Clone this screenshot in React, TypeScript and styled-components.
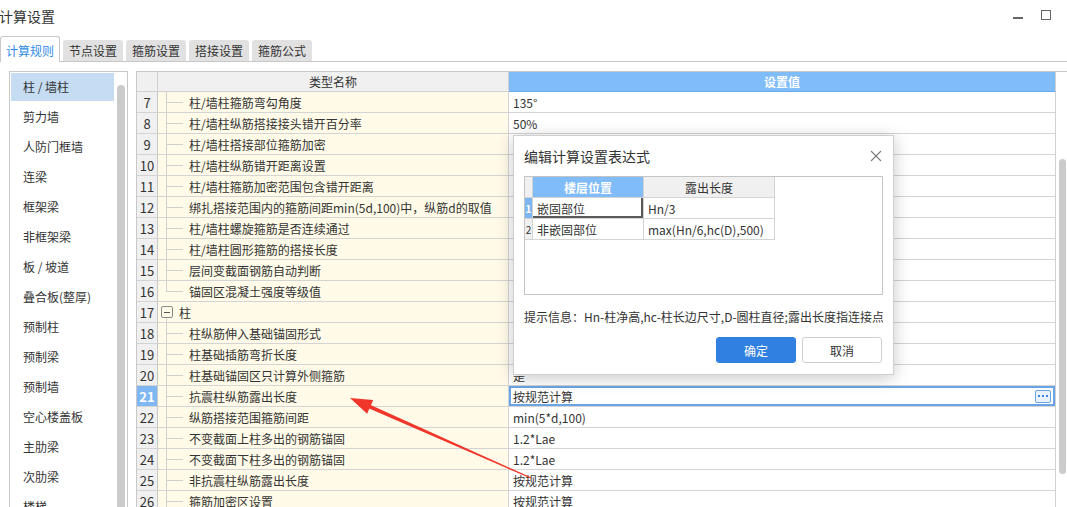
import React from 'react';
import styled, { createGlobalStyle, css } from 'styled-components';

const FONT = `"Noto Sans CJK SC", "Noto Sans", sans-serif`;

const GlobalStyle = createGlobalStyle`
  html, body {
    margin: 0;
    padding: 0;
    background: #fff;
  }
  #root {
    width: 1067px;
    height: 507px;
    overflow: hidden;
  }
`;

const Window = styled.div`
  position: relative;
  width: 1067px;
  height: 507px;
  overflow: hidden;
  display: flex;
  flex-direction: column;
  background: #fff;
  color: #333;
  font-family: ${FONT};
  font-size: 12px;
`;

const TitleBar = styled.div`
  height: 36px;
  flex: none;
  box-sizing: border-box;
  display: flex;
  align-items: flex-start;
  padding: 6px 16px 0 0;
`;

const Title = styled.div`
  font-size: 14px;
  line-height: 20px;
  margin-left: -1px;
`;

const Controls = styled.div`
  margin-left: auto;
  display: flex;
  align-items: flex-start;
  gap: 18px;
  padding-top: 4px;
`;

const MinButton = styled.div`
  width: 10px;
  height: 1.5px;
  margin-top: 7px;
  background: #666;
`;

const MaxButton = styled.div`
  width: 10px;
  height: 10px;
  box-sizing: border-box;
  border: 1.5px solid #666;
`;

const TabBar = styled.div`
  height: 26px;
  flex: none;
  box-sizing: border-box;
  display: flex;
  align-items: flex-end;
  gap: 3px;
  border-bottom: 1px solid #c8c8c8;
`;

const Tab = styled.div<{ $active?: boolean }>`
  width: 60px;
  height: 21px;
  box-sizing: border-box;
  display: flex;
  align-items: center;
  justify-content: center;
  border-radius: 3px 3px 0 0;
  background: #e1e1e1;
  color: #333;
  font-size: 12px;
  ${(p) =>
    p.$active &&
    css`
      height: 26px;
      margin-bottom: -1px;
      padding-top: 2px;
      background: #fff;
      color: #2f8be6;
      border: 1px solid #c8c8c8;
      border-bottom: none;
    `}
`;

const Body = styled.div`
  flex: 1;
  min-height: 0;
  display: flex;
  gap: 8px;
  padding: 9px 0 0 9px;
`;

const Sidebar = styled.div`
  width: 119px;
  flex: none;
  box-sizing: border-box;
  border: 1px solid #c8c8c8;
  border-bottom: none;
  padding: 1px;
  display: flex;
`;

const NavList = styled.div`
  width: 103px;
  flex: none;
  display: flex;
  flex-direction: column;
  gap: 2px;
`;

const NavItem = styled.div<{ $active?: boolean }>`
  height: 28px;
  flex: none;
  line-height: 28px;
  padding-left: 12px;
  white-space: nowrap;
  background: ${(p) => (p.$active ? '#c5dcf3' : 'transparent')};
`;

const ScrollTrack = styled.div<{ $top: number }>`
  flex: 1;
  padding: ${(p) => p.$top}px 0 0 3px;
`;

const ScrollThumb = styled.div<{ $w: number; $h: number }>`
  width: ${(p) => p.$w}px;
  height: ${(p) => p.$h}px;
  border-radius: 4px;
  background: #cbcbcb;
`;

const TablePane = styled.div`
  flex: 1;
  min-width: 0;
  display: flex;
  border-top: 1px solid #c8c8c8;
  border-left: 1px solid #c8c8c8;
`;

const Grid = styled.div`
  width: 919px;
  flex: none;
  display: flex;
  flex-direction: column;
`;

const HeadRow = styled.div`
  height: 20px;
  flex: none;
  display: flex;
`;

const HeadCell = styled.div<{ $w: number; $accent?: boolean }>`
  width: ${(p) => p.$w}px;
  flex: none;
  box-sizing: border-box;
  display: flex;
  align-items: center;
  justify-content: center;
  border-right: 1px solid #d0d0d0;
  border-bottom: 1px solid ${(p) => (p.$accent ? '#6aa9ea' : '#d0d0d0')};
  background: ${(p) => (p.$accent ? '#80bcf8' : '#f0f0f0')};
  color: ${(p) => (p.$accent ? '#fff' : '#333')};
  font-weight: ${(p) => (p.$accent ? 700 : 400)};
  font-size: 12px;
`;

const Row = styled.div`
  height: 21px;
  flex: none;
  display: flex;
`;

const NumCell = styled.div<{ $selected?: boolean }>`
  width: 21px;
  flex: none;
  box-sizing: border-box;
  display: flex;
  align-items: center;
  justify-content: center;
  border-right: 1px solid #c8c8c8;
  border-bottom: 1px solid #d4d4d4;
  background: ${(p) => (p.$selected ? '#7fb7f2' : '#f0f0f0')};
  color: ${(p) => (p.$selected ? '#fff' : '#333')};
  font-weight: ${(p) => (p.$selected ? 700 : 400)};
  font-size: 13px;
`;

const NameCell = styled.div`
  width: 351px;
  flex: none;
  box-sizing: border-box;
  display: flex;
  align-items: center;
  border-right: 1px solid #d4d4d4;
  border-bottom: 1px solid #d4d4d4;
  background: #fffbe8;
  white-space: nowrap;
  overflow: hidden;
`;

const Guide = styled.span<{ $last?: boolean }>`
  position: relative;
  width: 31px;
  flex: none;
  align-self: stretch;
  &::before {
    content: '';
    position: absolute;
    left: 8px;
    top: 0;
    width: 1px;
    height: ${(p) => (p.$last ? '50%' : '100%')};
    background: #cfcfcf;
  }
  &::after {
    content: '';
    position: absolute;
    left: 8px;
    top: 50%;
    width: 17px;
    height: 1px;
    background: #cfcfcf;
  }
`;

const Toggle = styled.span`
  position: relative;
  width: 12px;
  height: 12px;
  flex: none;
  box-sizing: border-box;
  margin: 0 6px 0 3px;
  border: 1px solid #8a8a8a;
  border-radius: 2px;
  display: flex;
  align-items: center;
  justify-content: center;
  &::before {
    content: '';
    width: 6px;
    height: 1px;
    background: #555;
  }
  &::after {
    content: '';
    position: absolute;
    left: 4px;
    top: 11px;
    width: 1px;
    height: 6px;
    background: #cfcfcf;
  }
`;

const ValueCell = styled.div<{ $selected?: boolean }>`
  width: 547px;
  flex: none;
  box-sizing: border-box;
  display: flex;
  align-items: center;
  padding-left: 4px;
  border-right: 1px solid #d0d0d0;
  border-bottom: 1px solid #d4d4d4;
  background: #fff;
  white-space: nowrap;
  ${(p) =>
    p.$selected &&
    css`
      box-shadow: inset 0 0 0 2px #69a5e6;
    `}
`;

const MoreButton = styled.span`
  width: 16px;
  height: 13px;
  margin: 0 4px 0 auto;
  box-sizing: border-box;
  border: 1px solid #6aa6e6;
  border-radius: 2px;
  background: #e9f1fc;
  display: flex;
  align-items: center;
  justify-content: center;
  gap: 2px;
`;

const Dot = styled.span`
  width: 2px;
  height: 2px;
  background: #3a84e0;
`;

const Dialog = styled.div`
  position: absolute;
  left: 513px;
  top: 135px;
  width: 381px;
  height: 240px;
  box-sizing: border-box;
  display: flex;
  flex-direction: column;
  padding: 0 10px 11px 10px;
  background: #fff;
  border: 1px solid #cfcfcf;
  box-shadow: 0 3px 16px rgba(0, 0, 0, 0.22);
`;

const DialogHeader = styled.div`
  height: 40px;
  flex: none;
  display: flex;
  align-items: center;
  justify-content: space-between;
  font-size: 14px;
  color: #333;
`;

const CloseIcon = styled.svg`
  width: 12px;
  height: 12px;
  margin-right: 1px;
`;

const ExprBox = styled.div`
  height: 119px;
  flex: none;
  box-sizing: border-box;
  border: 1px solid #c4c4c4;
  display: grid;
  grid-template-columns: 8px 111px 131px;
  grid-auto-rows: 21px;
  align-content: start;
`;

const ExprCell = styled.div<{ $tone?: 'head' | 'accent' | 'mark' | 'index'; $picked?: boolean; $center?: boolean }>`
  box-sizing: border-box;
  display: flex;
  align-items: center;
  justify-content: ${(p) => (p.$center ? 'center' : 'flex-start')};
  padding-left: ${(p) => (p.$center ? 0 : 4)}px;
  border-right: 1px solid #d4d4d4;
  border-bottom: 1px solid #d4d4d4;
  overflow: hidden;
  white-space: nowrap;
  font-size: 12px;
  background: #fff;
  color: #333;
  ${(p) =>
    p.$tone === 'head' &&
    css`
      background: #f0f0f0;
    `}
  ${(p) =>
    p.$tone === 'index' &&
    css`
      background: #f0f0f0;
      font-size: 10px;
    `}
  ${(p) =>
    p.$tone === 'accent' &&
    css`
      background: #80bcf8;
      color: #fff;
      font-weight: 700;
    `}
  ${(p) =>
    p.$tone === 'mark' &&
    css`
      background: #7db5f0;
      color: #fff;
      font-weight: 700;
      font-size: 10px;
    `}
  ${(p) =>
    p.$picked &&
    css`
      box-shadow: inset -2px -2px 0 #5a5a5a;
    `}
`;

const Hint = styled.div`
  height: 42px;
  flex: none;
  box-sizing: border-box;
  padding-top: 12px;
  line-height: 20px;
  white-space: nowrap;
  overflow: hidden;
  font-size: 12px;
  color: #333;
`;

const ButtonRow = styled.div`
  display: flex;
  justify-content: flex-end;
  gap: 6px;
  padding-right: 1px;
`;

const Button = styled.button<{ $primary?: boolean }>`
  width: 80px;
  height: 26px;
  box-sizing: border-box;
  border-radius: 3px;
  font-family: ${FONT};
  font-size: 12px;
  cursor: pointer;
  border: 1px solid ${(p) => (p.$primary ? '#2f80e0' : '#cfcfcf')};
  background: ${(p) => (p.$primary ? '#2f80e0' : '#fff')};
  color: ${(p) => (p.$primary ? '#fff' : '#333')};
`;

const Overlay = styled.svg`
  position: absolute;
  left: 0;
  top: 0;
  width: 1067px;
  height: 507px;
  pointer-events: none;
`;

type Kind = 'mid' | 'last' | 'group';

// values of rows 9-19 sit under the dialog, so they are left blank
const rows: { n: number; name: string; value: string; kind: Kind }[] = [
  { n: 7, name: '柱/墙柱箍筋弯勾角度', value: '135°', kind: 'mid' },
  { n: 8, name: '柱/墙柱纵筋搭接接头错开百分率', value: '50%', kind: 'mid' },
  { n: 9, name: '柱/墙柱搭接部位箍筋加密', value: '', kind: 'mid' },
  { n: 10, name: '柱/墙柱纵筋错开距离设置', value: '', kind: 'mid' },
  { n: 11, name: '柱/墙柱箍筋加密范围包含错开距离', value: '', kind: 'mid' },
  { n: 12, name: '绑扎搭接范围内的箍筋间距min(5d,100)中，纵筋d的取值', value: '', kind: 'mid' },
  { n: 13, name: '柱/墙柱螺旋箍筋是否连续通过', value: '', kind: 'mid' },
  { n: 14, name: '柱/墙柱圆形箍筋的搭接长度', value: '', kind: 'mid' },
  { n: 15, name: '层间变截面钢筋自动判断', value: '', kind: 'mid' },
  { n: 16, name: '锚固区混凝土强度等级值', value: '', kind: 'last' },
  { n: 17, name: '柱', value: '', kind: 'group' },
  { n: 18, name: '柱纵筋伸入基础锚固形式', value: '', kind: 'mid' },
  { n: 19, name: '柱基础插筋弯折长度', value: '', kind: 'mid' },
  { n: 20, name: '柱基础锚固区只计算外侧箍筋', value: '是', kind: 'mid' },
  { n: 21, name: '抗震柱纵筋露出长度', value: '按规范计算', kind: 'mid' },
  { n: 22, name: '纵筋搭接范围箍筋间距', value: 'min(5*d,100)', kind: 'mid' },
  { n: 23, name: '不变截面上柱多出的钢筋锚固', value: '1.2*Lae', kind: 'mid' },
  { n: 24, name: '不变截面下柱多出的钢筋锚固', value: '1.2*Lae', kind: 'mid' },
  { n: 25, name: '非抗震柱纵筋露出长度', value: '按规范计算', kind: 'mid' },
  { n: 26, name: '箍筋加密区设置', value: '按规范计算', kind: 'mid' },
];

const navItems = [
  '柱 / 墙柱',
  '剪力墙',
  '人防门框墙',
  '连梁',
  '框架梁',
  '非框架梁',
  '板 / 坡道',
  '叠合板(整厚)',
  '预制柱',
  '预制梁',
  '预制墙',
  '空心楼盖板',
  '主肋梁',
  '次肋梁',
  '楼梯',
];

const tabs = ['计算规则', '节点设置', '箍筋设置', '搭接设置', '箍筋公式'];

const SELECTED = 21;

const App: React.FC = () => {
  return (
    <Window>
      <GlobalStyle />
      <TitleBar>
        <Title>计算设置</Title>
        <Controls>
          <MinButton />
          <MaxButton />
        </Controls>
      </TitleBar>

      <TabBar>
        {tabs.map((t, i) => (
          <Tab key={t} $active={i === 0}>
            {t}
          </Tab>
        ))}
      </TabBar>

      <Body>
        <Sidebar>
          <NavList>
            {navItems.map((item, i) => (
              <NavItem key={item} $active={i === 0}>
                {item}
              </NavItem>
            ))}
          </NavList>
          <ScrollTrack $top={12}>
            <ScrollThumb $w={8} $h={500} />
          </ScrollTrack>
        </Sidebar>

        <TablePane>
          <Grid>
            <HeadRow>
              <HeadCell $w={21} />
              <HeadCell $w={351}>类型名称</HeadCell>
              <HeadCell $w={547} $accent>
                设置值
              </HeadCell>
            </HeadRow>
            {rows.map((r) => (
              <Row key={r.n}>
                <NumCell $selected={r.n === SELECTED}>{r.n}</NumCell>
                <NameCell>
                  {r.kind === 'group' ? <Toggle /> : <Guide $last={r.kind === 'last'} />}
                  {r.name}
                </NameCell>
                <ValueCell $selected={r.n === SELECTED}>
                  {r.value}
                  {r.n === SELECTED && (
                    <MoreButton>
                      <Dot />
                      <Dot />
                      <Dot />
                    </MoreButton>
                  )}
                </ValueCell>
              </Row>
            ))}
          </Grid>
          <ScrollTrack $top={87}>
            <ScrollThumb $w={7} $h={315} />
          </ScrollTrack>
        </TablePane>
      </Body>

      <Dialog>
        <DialogHeader>
          编辑计算设置表达式
          <CloseIcon viewBox="0 0 12 12">
            <path d="M1 1 L11 11 M11 1 L1 11" stroke="#7a7a7a" strokeWidth="1.1" fill="none" />
          </CloseIcon>
        </DialogHeader>
        <ExprBox>
          <ExprCell $tone="head" />
          <ExprCell $tone="accent" $center>
            楼层位置
          </ExprCell>
          <ExprCell $tone="head" $center>
            露出长度
          </ExprCell>
          <ExprCell $tone="mark" $center>
            1
          </ExprCell>
          <ExprCell $picked>嵌固部位</ExprCell>
          <ExprCell>Hn/3</ExprCell>
          <ExprCell $tone="index" $center>
            2
          </ExprCell>
          <ExprCell>非嵌固部位</ExprCell>
          <ExprCell>max(Hn/6,hc(D),500)</ExprCell>
        </ExprBox>
        <Hint>提示信息：Hn-柱净高,hc-柱长边尺寸,D-圆柱直径;露出长度指连接点</Hint>
        <ButtonRow>
          <Button $primary>确定</Button>
          <Button>取消</Button>
        </ButtonRow>
      </Dialog>

      <Overlay viewBox="0 0 1067 507">
        <polygon points="365.7,407.1 367.3,403.5 531.2,477.5 530.8,478.5" fill="#f0352a" />
        <polygon points="350,398 373.2,400.0 367.1,413.8" fill="#f0352a" />
      </Overlay>
    </Window>
  );
};

export default App;
